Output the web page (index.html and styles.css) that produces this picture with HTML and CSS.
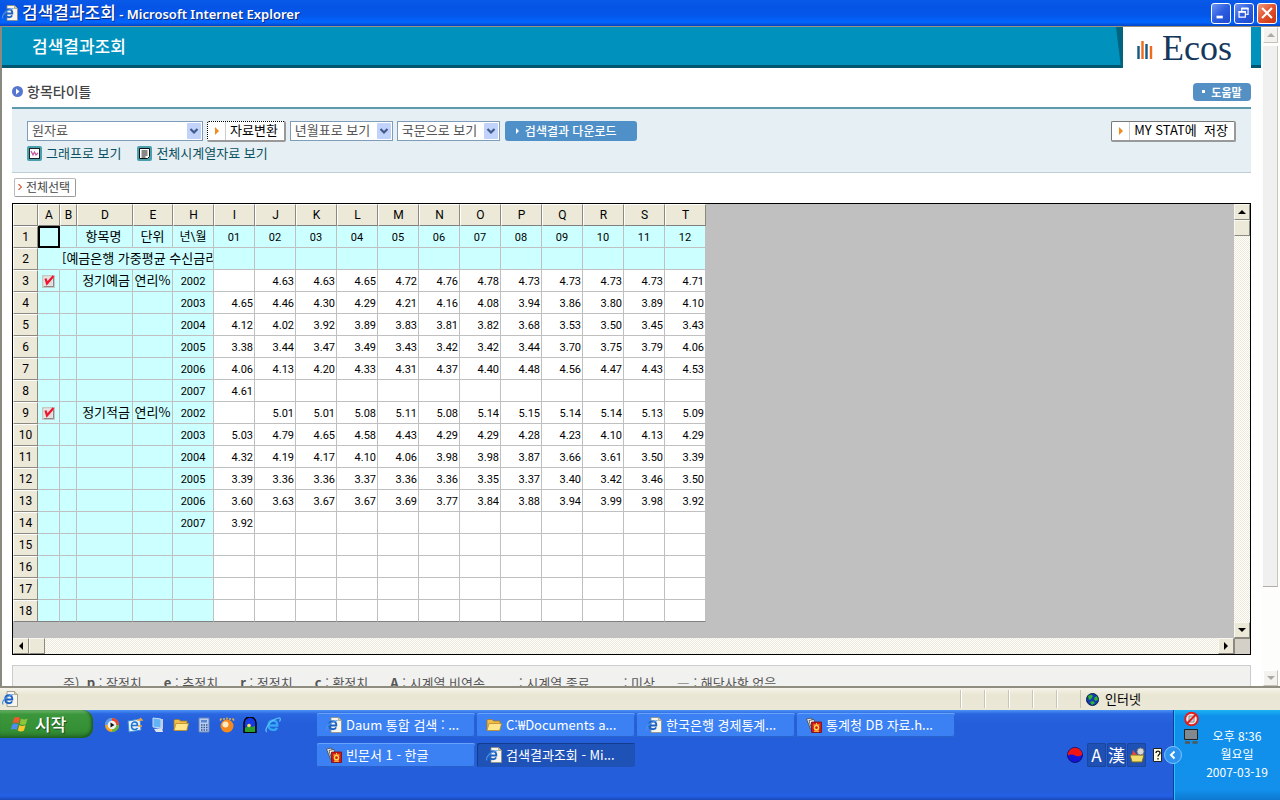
FILE: index.html
```
<!DOCTYPE html>
<html lang="ko">
<head>
<meta charset="utf-8">
<title>검색결과조회 - Microsoft Internet Explorer</title>
<link rel="stylesheet" href="styles.css">
</head>
<body>
<svg class="defs" aria-hidden="true">
  <defs>
    <symbol id="ie-page" viewBox="0 0 16 16">
      <path d="M5 .5h7.500l3 3v12H5z" fill="#f6f5ee" stroke="#8d8d80" stroke-width=".8"/>
      <path d="M12.500 .5v3h3" fill="#d9c98a" stroke="#8d8d80" stroke-width=".6"/>
      <path d="M3.500 8.500h6.800c.2-2.800-1.300-4.200-3.300-4.200-2.200 0-3.800 1.700-3.800 4s1.600 3.900 3.900 3.900c1.400 0 2.500-.7 3-1.800" fill="none" stroke="#1b62c4" stroke-width="1.900"/>
      <path d="M1.200 13.500C-1 11 3 5.500 11.500 3.500" fill="none" stroke="#4b93e6" stroke-width="1.100"/>
    </symbol>
    <symbol id="ie" viewBox="0 0 16 16">
      <path d="M4 8.500h8.300c.2-3.300-1.700-5-4.200-5-2.700 0-4.600 2-4.600 4.700s2 4.700 4.700 4.700c1.800 0 3.200-.9 3.800-2.200" fill="none" stroke="#35a8f5" stroke-width="2.300"/>
      <path d="M1.800 15C-1.500 13 5 3 13.500 1c2.500-.4 2 2 1 3.500" fill="none" stroke="#5cc1fa" stroke-width="1.200"/>
    </symbol>
    <symbol id="hwp" viewBox="0 0 16 16">
      <path d="M.5 2l5-1 3 9-4 2z" fill="#f3f3f3" stroke="#444" stroke-width=".8"/>
      <path d="M3 3.500l5-1 2 9-4 2z" fill="#fff" stroke="#444" stroke-width=".8"/>
      <path d="M5.500 5h10v10.500h-10z" fill="#d31a1a" stroke="#7a0c0c" stroke-width=".8"/>
      <circle cx="10.500" cy="10.700" r="2.100" fill="none" stroke="#ffe04a" stroke-width="1.400"/>
      <path d="M10.500 6v1.500M7.500 8h6M8 14.200h5" stroke="#ffe04a" stroke-width="1"/>
    </symbol>
    <symbol id="folder" viewBox="0 0 16 16">
      <path d="M1 13V3.500l1-1h4l1.500 1.500H14V13z" fill="#f0bd4a" stroke="#a8771a" stroke-width=".8"/>
      <path d="M1 13.500L3 6.500h12.500l-1.800 7z" fill="#ffe68c" stroke="#b98a28" stroke-width=".8"/>
    </symbol>
    <symbol id="chevron" viewBox="0 0 14 16">
      <rect width="14" height="16" rx="1" fill="#c1d2fb"/>
      <path d="M3.500 6l3.500 3.500L10.500 6" fill="none" stroke="#3f5a8c" stroke-width="2.200"/>
    </symbol>
    <symbol id="go" viewBox="0 0 6 8"><path d="M1 0l4 4-4 4z" fill="#f08a1c"/></symbol>
    <symbol id="up" viewBox="0 0 8 4"><path d="M0 4l4-4 4 4z" fill="currentColor"/></symbol>
    <symbol id="down" viewBox="0 0 8 4"><path d="M0 0l4 4 4-4z" fill="currentColor"/></symbol>
    <symbol id="left" viewBox="0 0 4 8"><path d="M4 0L0 4l4 4z" fill="currentColor"/></symbol>
    <symbol id="right" viewBox="0 0 4 8"><path d="M0 0l4 4-4 4z" fill="currentColor"/></symbol>
  </defs>
</svg>

<header class="titlebar">
  <svg class="i16"><use href="#ie-page"/></svg>
  <h1><span class="ko">검색결과조회</span> - Microsoft Internet Explorer</h1>
  <div class="winbtns">
    <button aria-label="최소화"><svg viewBox="0 0 20 20"><path d="M5 14.500h7" stroke="#fff" stroke-width="3"/></svg></button>
    <button aria-label="이전 크기로"><svg viewBox="0 0 20 20"><path d="M7.500 8V5h7v6.500h-2M4.500 8.500h7v6h-7z" fill="none" stroke="#fff" stroke-width="1.300"/><path d="M7 5h8M4 8.800h8" stroke="#fff" stroke-width="2"/></svg></button>
    <button class="close" aria-label="닫기"><svg viewBox="0 0 20 20"><path d="M4.500 4.500l11 11M15.500 4.500l-11 11" stroke="#fff" stroke-width="2.300"/></svg></button>
  </div>
</header>

<div class="window">
  <main>
    <div class="banner">
      <h2>검색결과조회</h2>
      <svg class="slant" viewBox="0 0 7 40" preserveAspectRatio="none"><path d="M0 0h7v40H5z" fill="#02647f"/></svg>
      <div class="logo">
        <svg viewBox="0 0 16 20"><path d="M1.500 6v13M9.500 4v15" stroke="#155a80" stroke-width="2.400"/><path d="M5.500 1v18M14 6v13" stroke="#f26a1c" stroke-width="2.400"/></svg>
        <span>Ecos</span>
      </div>
    </div>

    <div class="body">
      <div class="heading">
        <svg class="bullet" viewBox="0 0 11 11"><circle cx="5.500" cy="5.500" r="5.500" fill="#5676cf"/><path d="M4 2.500l3.500 3L4 8.500z" fill="#fff"/></svg>
        <h3>항목타이틀</h3>
        <button class="help"><i></i>도움말</button>
      </div>

      <form class="toolbar">
        <div class="row">
          <span class="sel wide"><select aria-label="자료 종류"><option>원자료</option></select><svg><use href="#chevron"/></svg></span>
          <button type="button" class="btn focus"><span class="mark"><svg><use href="#go"/></svg></span><span class="txt">자료변환</span></button>
          <span class="sel"><select aria-label="표 형식"><option>년월표로 보기</option></select><svg><use href="#chevron"/></svg></span>
          <span class="sel"><select aria-label="언어"><option>국문으로 보기</option></select><svg><use href="#chevron"/></svg></span>
          <button type="button" class="download"><svg viewBox="0 0 4 6"><path d="M0 0l3 3-3 3z" fill="#fff"/></svg>검색결과 다운로드</button>
          <button type="button" class="btn save"><span class="mark"><svg><use href="#go"/></svg></span><span class="txt">MY STAT에 &nbsp;저장</span></button>
        </div>
        <div class="links">
          <a href="#"><svg viewBox="0 0 15 15"><rect width="15" height="15" rx="2" fill="#4aa0ad"/><rect x="2.500" y="2.500" width="10" height="10" fill="#fff" stroke="#222"/><path d="M4 5l2 4 1.500-3L9 9l2-2" fill="none" stroke="#c2559a" stroke-width="1.200"/></svg>그래프로 보기</a>
          <a href="#"><svg viewBox="0 0 15 15"><rect width="15" height="15" rx="2" fill="#4aa0ad"/><path d="M2.500 2.500h10v8l-2 2h-8z" fill="#fff" stroke="#111"/><path d="M4.500 5h6M4.500 7h6M4.500 9h6M4.500 11h4" stroke="#111"/></svg>전체시계열자료 보기</a>
        </div>
      </form>

      <button class="all"><svg viewBox="0 0 4 6"><path d="M.5 0l3 3-3 3" fill="none" stroke="#d8623a" stroke-width="1.200"/></svg>전체선택</button>

      <div class="grid">
        <div class="sheet">
          <table>
            <colgroup><col class="c-n"><col class="c-a"><col class="c-b"><col class="c-d"><col class="c-e"><col class="c-v" span="13"></colgroup>
            <thead>
              <tr><th><th>A<th>B<th>D<th>E<th>H<th>I<th>J<th>K<th>L<th>M<th>N<th>O<th>P<th>Q<th>R<th>S<th>T
            </thead>
            <tbody>
              <tr class="top"><th>1<td class="cur"><td><td>항목명<td>단위<td>년\월<td>01<td>02<td>03<td>04<td>05<td>06<td>07<td>08<td>09<td>10<td>11<td>12
              <tr class="top"><th>2<td class="open"><td colspan="4" class="group">[예금은행 가중평균 수신금리<td><td><td><td><td><td><td><td><td><td><td><td>
              <tr><th>3<td><input type="checkbox" checked aria-label="정기예금 선택"><td><td>정기예금<td>연리%<td>2002<td><td>4.63<td>4.63<td>4.65<td>4.72<td>4.76<td>4.78<td>4.73<td>4.73<td>4.73<td>4.73<td>4.71
              <tr><th>4<td><td><td><td><td>2003<td>4.65<td>4.46<td>4.30<td>4.29<td>4.21<td>4.16<td>4.08<td>3.94<td>3.86<td>3.80<td>3.89<td>4.10
              <tr><th>5<td><td><td><td><td>2004<td>4.12<td>4.02<td>3.92<td>3.89<td>3.83<td>3.81<td>3.82<td>3.68<td>3.53<td>3.50<td>3.45<td>3.43
              <tr><th>6<td><td><td><td><td>2005<td>3.38<td>3.44<td>3.47<td>3.49<td>3.43<td>3.42<td>3.42<td>3.44<td>3.70<td>3.75<td>3.79<td>4.06
              <tr><th>7<td><td><td><td><td>2006<td>4.06<td>4.13<td>4.20<td>4.33<td>4.31<td>4.37<td>4.40<td>4.48<td>4.56<td>4.47<td>4.43<td>4.53
              <tr><th>8<td><td><td><td><td>2007<td>4.61<td><td><td><td><td><td><td><td><td><td><td>
              <tr><th>9<td><input type="checkbox" checked aria-label="정기적금 선택"><td><td>정기적금<td>연리%<td>2002<td><td>5.01<td>5.01<td>5.08<td>5.11<td>5.08<td>5.14<td>5.15<td>5.14<td>5.14<td>5.13<td>5.09
              <tr><th>10<td><td><td><td><td>2003<td>5.03<td>4.79<td>4.65<td>4.58<td>4.43<td>4.29<td>4.29<td>4.28<td>4.23<td>4.10<td>4.13<td>4.29
              <tr><th>11<td><td><td><td><td>2004<td>4.32<td>4.19<td>4.17<td>4.10<td>4.06<td>3.98<td>3.98<td>3.87<td>3.66<td>3.61<td>3.50<td>3.39
              <tr><th>12<td><td><td><td><td>2005<td>3.39<td>3.36<td>3.36<td>3.37<td>3.36<td>3.36<td>3.35<td>3.37<td>3.40<td>3.42<td>3.46<td>3.50
              <tr><th>13<td><td><td><td><td>2006<td>3.60<td>3.63<td>3.67<td>3.67<td>3.69<td>3.77<td>3.84<td>3.88<td>3.94<td>3.99<td>3.98<td>3.92
              <tr><th>14<td><td><td><td><td>2007<td>3.92<td><td><td><td><td><td><td><td><td><td><td>
              <tr><th>15<td><td><td><td><td><td><td><td><td><td><td><td><td><td><td><td><td>
              <tr><th>16<td><td><td><td><td><td><td><td><td><td><td><td><td><td><td><td><td>
              <tr><th>17<td><td><td><td><td><td><td><td><td><td><td><td><td><td><td><td><td>
              <tr><th>18<td><td><td><td><td><td><td><td><td><td><td><td><td><td><td><td><td>
            </tbody>
          </table>
        </div>
        <div class="vbar"><span class="key"><svg class="v"><use href="#up"/></svg></span><span class="key"></span><span class="key end"><svg class="v"><use href="#down"/></svg></span></div>
        <div class="hbar"><span class="key"><svg class="h"><use href="#left"/></svg></span><span class="key"></span><span class="key end"><svg class="h"><use href="#right"/></svg></span></div>
        <div class="corner"></div>
      </div>

      <p class="notes"><span>주)  <b>p</b> : 잠정치</span><span><b>e</b> : 추정치</span><span><b>r</b> : 정정치</span><span><b>c</b> : 확정치</span><span><b>A</b> : 시계열 비연속</span><span class="gap">: 시계열 종료</span><span class="gap">: 미상</span><span>― : 해당사항 없음</span></p>
    </div>
  </main>
  <div class="pagebar"><span class="pkey"><svg class="v"><use href="#up"/></svg></span><span class="pthumb"></span><span class="pkey end"><svg class="v"><use href="#down"/></svg></span></div>
</div>

<div class="status">
  <svg class="i16"><use href="#ie-page"/></svg>
  <div class="cells"><i></i><i></i><i></i><i></i><i></i></div>
  <div class="zone"><svg viewBox="0 0 13 13"><circle cx="6.500" cy="6.500" r="6" fill="#123bb0" stroke="#0a1d4a"/><path d="M2 3l3-1.500L7 3 5 6 3 7zM8 5l3-2 1 4-3 1zM4 9l3-1 2 2-3 2z" fill="#2fb52f"/></svg>인터넷</div>
</div>

<footer class="taskbar">
  <button class="start"><svg viewBox="0 0 18 18"><path d="M3 3c2-1.500 4-1.300 6 0L7.500 8.500c-2-1.200-4-1.300-6 0z" fill="#f0592b"/><path d="M10 3.500c2 1.200 4 1.200 6.500 0L15 9c-2 1.200-4 1.200-6.300 0z" fill="#8cc63e"/><path d="M1.200 9.500c2-1.300 4-1.200 6 0L5.700 15c-2-1.200-4-1.300-6 0z" fill="#4f8df0"/><path d="M8.300 10c2 1.300 4 1.200 6.300 0L13 15.500c-2 1.200-4 1.200-6.200 0z" fill="#fbc72c"/></svg>시작</button>
  <nav class="quick">
    <svg viewBox="0 0 16 16"><circle cx="8" cy="8" r="7" fill="#f7a51e"/><path d="M8 1a7 7 0 0 1 7 7H8z" fill="#e8452c"/><path d="M1 8a7 7 0 0 1 7-7v7z" fill="#5a9df2"/><path d="M15 8a7 7 0 0 1-7 7V8z" fill="#62b53b"/><circle cx="8" cy="8" r="4.300" fill="#f2f2f2"/><path d="M6.500 5.500l4 2.500-4 2.500z" fill="#111"/></svg>
    <svg viewBox="0 0 16 16"><path d="M1 4l12-2 1 11-12 2z" fill="#e6f2ff" stroke="#3b8ed8"/><path d="M5 8.500h5.500c0-2.500-1.200-3.500-2.800-3.500S4.500 6.500 4.500 8.800s1.500 3.700 3.200 3.700 2.500-.8 2.800-1.500" fill="none" stroke="#1c74d0" stroke-width="1.600"/><path d="M10 3h5l-2-2M15 9h-4" stroke="#f2a23a" stroke-width="1.300" fill="none"/></svg>
    <svg viewBox="0 0 16 16"><path d="M3 1l8 1v9l-8-1z" fill="#62b4f5" stroke="#c9dcf2"/><path d="M4 12l8-1 1 4H6z" fill="#dfe3ea"/><path d="M12 2v10" stroke="#c4cfe2" stroke-width="2"/></svg>
    <svg><use href="#folder"/></svg>
    <svg viewBox="0 0 16 16"><path d="M3 1h10v14H3z" fill="#b9cdf2" stroke="#6c87b8"/><path d="M5 3h6v2.500H5z" fill="#5c88cf"/><path d="M5 8h1.500M7.500 8H9M10 8h1.500M5 10.500h1.500M7.500 10.500H9M10 10.500h1.500M5 13h1.500M7.500 13H9M10 13h1.500" stroke="#34568f" stroke-width="1.400"/></svg>
    <svg viewBox="0 0 16 16"><circle cx="8" cy="9" r="6.500" fill="#f58a1c"/><circle cx="6.500" cy="7.500" r="3" fill="#ffe9c4"/><path d="M1 3.500l1.500-2M5 3V1M8 2.500V.5M11 3V1M15 3.500l-1.500-2" stroke="#f0b040" stroke-width="1.500"/></svg>
    <svg viewBox="0 0 16 16"><path d="M2 15.500V6a6 6 0 0 1 12 0v9.500z" fill="#1639e8" stroke="#050505" stroke-width="1.500"/><path d="M3 15v-4l3-2 4 1 3-1v6z" fill="#2c9e2c"/><circle cx="7" cy="8.500" r="1.800" fill="#ffe34a"/></svg>
    <svg><use href="#ie"/></svg>
  </nav>
  <div class="tasks">
    <button><svg><use href="#ie-page"/></svg>Daum 통합 검색 : ...</button>
    <button><svg><use href="#folder"/></svg>C:₩Documents a...</button>
    <button><svg><use href="#ie-page"/></svg>한국은행 경제통계...</button>
    <button><svg><use href="#hwp"/></svg>통계청 DB 자료.h...</button>
    <button><svg><use href="#hwp"/></svg>빈문서 1 - 한글</button>
    <button class="on"><svg><use href="#ie-page"/></svg>검색결과조회 - Mi...</button>
  </div>
  <div class="ime">
    <svg class="flag" viewBox="0 0 16 16"><circle cx="8" cy="8" r="7.500" fill="#1414d8" stroke="#0a0a50" stroke-width=".8"/><path d="M.8 8.500a7.200 7.200 0 0 1 14.400-1C13 9.500 10.500 10 8 8.500S3 7.500.8 8.500z" fill="#f01414"/></svg>
    <button>A</button><button>漢</button>
    <button aria-label="IME 패드"><svg viewBox="0 0 16 16"><path d="M1 8h14l-2 7H3z" fill="#f2dc6a" stroke="#7a6a20"/><path d="M3 8l1-5 4 5" fill="#e04a3a"/><circle cx="11.500" cy="4.500" r="3.500" fill="#d8d8d8" stroke="#777"/></svg></button>
    <svg class="q" viewBox="0 0 10 14"><path d="M.5.5h8v13h-8z" fill="#fffbe0" stroke="#222"/><path d="M3 5c0-2.500 4-2.500 4 0 0 1.500-2 1.500-2 3.500M5 10v1.500" fill="none" stroke="#111" stroke-width="1.300"/></svg>
  </div>
  <div class="tray">
    <button class="fold" aria-label="숨겨진 아이콘 표시"><svg viewBox="0 0 18 18"><circle cx="9" cy="9" r="8.500" fill="#2d93ee" stroke="#7cc4fa"/><path d="M10.500 5.500L7 9l3.500 3.500" fill="none" stroke="#fff" stroke-width="2"/></svg></button>
    <div class="trayicons">
      <svg viewBox="0 0 15 15"><circle cx="7.500" cy="7.500" r="6.300" fill="#f5e9e6" stroke="#e01e1e" stroke-width="1.900"/><path d="M5 4.500h5v6H5z" fill="#ddd" stroke="#888"/><path d="M3 12l9-9" stroke="#e01e1e" stroke-width="1.900"/></svg>
      <svg viewBox="0 0 15 16"><path d="M.5.500h13v10H.5z" fill="#808890" stroke="#222"/><path d="M1 13.500h5M8.500 13.500h5" stroke="#555" stroke-width="2.500"/></svg>
    </div>
    <div class="clock"><span>오후 8:36</span><span>월요일</span><span>2007-03-19</span></div>
  </div>
</footer>
</body>
</html>
```
FILE: styles.css
```
* { box-sizing: border-box; }
html, body { height: 100%; }
body {
  margin: 0;
  display: flex;
  flex-direction: column;
  overflow: hidden;
  background: #fff;
  color: #000;
  font: 13px/16px "Noto Sans CJK KR", sans-serif;
}
h1, h2, h3, p { margin: 0; font-weight: 400; }
button, select { font: inherit; color: inherit; margin: 0; padding: 0; border: 0; background: none; }
svg { display: block; flex: none; }
.defs { position: absolute; width: 0; height: 0; }
.i16 { width: 16px; height: 16px; }

/* window title */
.titlebar {
  flex: none;
  height: 26px;
  display: flex;
  align-items: center;
  gap: 4px;
  padding: 0 3px 0 2px;
  background: linear-gradient(#0a5ae8, #0554e6 25%, #0457ea 60%, #0166ff 85%, #0144c8);
}
.titlebar h1 {
  flex: 1;
  color: #fff;
  font: 600 13px/20px "Noto Sans", "Noto Sans CJK KR", sans-serif;
  text-shadow: 1px 1px #0a2a80;
}
.titlebar .ko { font-size: 17px; font-weight: 500; }
.winbtns { display: flex; gap: 3px; }
.winbtns button {
  width: 20px;
  height: 21px;
  border: 1px solid #fff;
  border-radius: 3px;
  background: linear-gradient(135deg, #6e94f0, #2c5ce0 50%, #1c4ad0);
}
.winbtns .close { background: linear-gradient(135deg, #f09a7c, #e0512c 50%, #c8340e); }
.winbtns svg { width: 18px; height: 18px; }

/* page viewport */
.window {
  flex: 1;
  min-height: 0;
  display: flex;
  border-top: 1px solid #9a917e;
  border-left: 2px solid #8a8980;
}
main { flex: 1; min-width: 0; overflow: hidden; }
.banner {
  height: 41px;
  display: flex;
  padding: 0 10px 0 30px;
  background: #0092bd;
  border-bottom: 3px solid #00566e;
}
.banner h2 { flex: 1; color: #fff; font-size: 17px; font-weight: 500; line-height: 38px; }
.slant { width: 7px; height: 41px; }
.logo {
  height: 41px;
  width: 128px;
  display: flex;
  align-items: center;
  gap: 9px;
  padding-left: 14px;
  background: #fff;
  color: #14375c;
  font: 36px/40px "Liberation Serif", serif;
}
.logo svg { width: 16px; height: 20px; margin-top: 5px; }
.body { padding: 0 10px; }
.heading {
  height: 39px;
  display: flex;
  align-items: center;
  gap: 4px;
  padding: 8px 0 0;
  color: #444;
}
.heading h3 { flex: 1; font-weight: 500; font-size: 14px; line-height: 16px; padding-bottom: 2px; }
.bullet { width: 11px; height: 11px; }
.help {
  width: 58px;
  height: 18px;
  display: flex;
  align-items: center;
  justify-content: center;
  gap: 6px;
  border-radius: 4px;
  background: #5490c4;
  color: #fff;
  font-size: 11px;
  font-weight: 700;
}
.help i { width: 3px; height: 3px; background: #fff; }

.toolbar {
  height: 66px;
  padding: 11px 15px 0;
  background: #e6eff3;
  border-top: 2px solid #5c9aac;
  border-bottom: 1px solid #bcced6;
}
.row { display: flex; align-items: center; gap: 4px; height: 22px; }
.sel { position: relative; width: 103px; height: 20px; }
.sel.wide { width: 176px; }
.sel select {
  appearance: none;
  width: 100%;
  height: 20px;
  padding: 0 18px 2px 4px;
  border: 1px solid #7f9db9;
  background: #fff;
  color: #555;
  line-height: 16px;
}
.sel svg { position: absolute; right: 2px; top: 2px; width: 14px; height: 16px; pointer-events: none; }
.btn {
  height: 21px;
  display: flex;
  align-items: center;
  border: 1px solid #777;
  border-right: 2px solid #999;
  border-bottom: 2px solid #999;
  border-radius: 2px;
  background: #fff;
}
.btn .mark { width: 18px; height: 18px; display: grid; place-items: center; border-right: 1px solid #ccc; }
.btn .mark svg { width: 6px; height: 8px; }
.btn .txt { padding: 0 6px 2px 4px; white-space: nowrap; }
.btn.focus { border-left: 1px dotted #000; border-top: 1px dotted #000; }
.download {
  width: 132px;
  height: 20px;
  margin-left: 1px;
  display: flex;
  align-items: center;
  gap: 5px;
  padding-left: 11px;
  border-radius: 3px;
  background: #5090c8;
  color: #fff;
  font-size: 12px;
  font-weight: 500;
}
.download svg { width: 4px; height: 6px; }
.save { margin-left: auto; }
.links { display: flex; gap: 16px; height: 22px; align-items: center; }
.links a { display: flex; align-items: center; gap: 4px; color: #0a5262; text-decoration: none; }
.links svg { width: 15px; height: 15px; }

.all {
  height: 19px;
  margin: 5px 0 6px 2px;
  display: flex;
  align-items: center;
  gap: 4px;
  padding: 0 5px 2px 3px;
  border: 1px solid #bbb;
  border-right-color: #999;
  border-bottom-color: #999;
  border-radius: 2px;
  background: #fff;
  color: #444;
  font-size: 12px;
}
.all svg { width: 4px; height: 6px; }

/* spreadsheet */
.grid {
  display: grid;
  grid-template-columns: 1fr 16px;
  grid-template-rows: 434px 16px;
  border: 1px solid #000;
}
.sheet { overflow: hidden; background: #c0c0c0; }
table {
  width: 693px;
  table-layout: fixed;
  border-collapse: separate;
  border-spacing: 0;
}
.c-n { width: 25px; }
.c-a { width: 22px; }
.c-b { width: 17px; }
.c-d { width: 56px; }
.c-e { width: 40px; }
.c-v { width: 41px; }
th, td {
  height: 22px;
  padding: 0;
  overflow: hidden;
  white-space: nowrap;
  text-align: center;
  font: 11px/16px Roboto, "Noto Sans CJK KR", sans-serif;
}
th {
  background: #ece9d8;
  border-right: 1px solid #8c8a80;
  border-bottom: 1px solid #8c8a80;
  border-top: 1px solid #fff;
  border-left: 1px solid #fff;
  font-size: 12px;
}
td {
  background: #fff;
  border-right: 1px solid #c0c0c0;
  border-bottom: 1px solid #c0c0c0;
  text-align: right;
  padding: 2px 1px 0 0;
}
td:nth-child(-n+6), .top td { background: #ccffff; text-align: center; padding: 2px 0 0; }
tr td:nth-child(4), tr td:nth-child(5) { font-family: "Noto Sans CJK KR", sans-serif; font-size: 13px; padding-top: 0; padding-bottom: 2px; }
.top td:nth-child(n+7) { font-size: 11px; }
tr:last-child td, tr:last-child th { border-bottom-color: #808080; }
thead th { border-bottom-color: #8c8a80; }
tr td:nth-child(4) { text-align: right; padding-right: 2px; }
.top td:nth-child(4) { text-align: center; }
.top td:nth-child(6) { font-size: 12px; padding-top: 0; }
.top td.group { text-align: left; padding: 0 0 2px 2px; font: 13px/16px "Noto Sans CJK KR", sans-serif; }
.top td.open { border-right-color: #ccffff; }
.top td.cur { border: 2px solid #000; }
td input {
  appearance: none;
  display: block;
  width: 13px;
  height: 13px;
  margin: 0 auto;
  background: #c8c8c4 url("data:image/svg+xml,%3Csvg xmlns='http://www.w3.org/2000/svg' viewBox='0 0 13 13'%3E%3Cpath d='M2 2h9v9H2z' fill='%23ddd' stroke='%23eee'/%3E%3Cpath d='M2 11.500h9.500V3' fill='none' stroke='%23888'/%3E%3Cpath d='M3.500 3.500l1.500 5L11.500 1' fill='none' stroke='%23f0142c' stroke-width='2.200'/%3E%3C/svg%3E");
}
.vbar, .hbar {
  display: flex;
  background: repeating-conic-gradient(#fff 0 25%, #ece9d8 0 50%) 0 0 / 2px 2px;
}
.vbar { flex-direction: column; }
.key {
  width: 16px;
  height: 16px;
  display: grid;
  place-items: center;
  background: #ece9d8;
  border: 1px solid #f8f7f0;
  border-right-color: #8c8a80;
  border-bottom-color: #8c8a80;
}
.end { margin-top: auto; }
.hbar .end { margin: 0 0 0 auto; }
svg.v { width: 8px; height: 4px; }
svg.h { width: 4px; height: 8px; }
.corner { background: #d4d0c8; border-left: 1px solid #8c8a80; border-top: 1px solid #8c8a80; }

.notes {
  display: flex;
  gap: 22px;
  height: 60px;
  margin-top: 10px;
  padding: 9px 50px;
  background: #f1f1f0;
  border: 1px solid #ccc;
  color: #555;
  font-size: 13px;
  white-space: pre;
}
.notes .gap { padding-left: 12px; }

/* page scroll bar */
.pagebar { width: 19px; display: flex; flex-direction: column; align-items: center; background: #fdfdfc; }
.pkey {
  width: 15px;
  height: 16px;
  display: grid;
  place-items: center;
  background: #f3f2ee;
  border: 1px solid #fff;
  border-right-color: #c4c2b8;
  border-bottom-color: #c4c2b8;
  color: #aaa;
}
.pthumb { width: 15px; flex: 0 1 541px; margin-top: 3px; background: #f1f0f0; border-right: 1px solid #c8c6bc; border-bottom: 1px solid #b0aea4; }

/* status line */
.status {
  flex: none;
  height: 24px;
  display: flex;
  align-items: center;
  padding: 0 4px 0 2px;
  border-top: 2px solid #8f8d80;
  background: linear-gradient(#f6f4ea, #e9e6d4 30%, #ebe8d8);
}
.cells { margin-left: auto; display: flex; }
.cells i { width: 24px; height: 18px; border-left: 1px solid #c8c5b4; box-shadow: inset 1px 0 #fff; }
.zone { display: flex; align-items: center; gap: 6px; width: 196px; height: 18px; padding-left: 5px; border-left: 1px solid #c8c5b4; }
.zone svg { width: 13px; height: 13px; }

/* task bar */
.taskbar {
  flex: none;
  height: 90px;
  display: flex;
  align-items: flex-start;
  background: linear-gradient(#4a92f6, #2a66e0 4px, #245edb 14px, #245edb 80px, #2460e4 86px, #1a48b8);
  color: #fff;
}
.start {
  width: 93px;
  height: 28px;
  display: flex;
  align-items: center;
  gap: 6px;
  padding-left: 11px;
  border-radius: 0 10px 10px 0;
  background: linear-gradient(#6cb46a, #3c973c 15%, #348f34 75%, #26722a);
  box-shadow: inset -2px -1px 3px #1c5c20;
  font-size: 17px;
  font-weight: 500;
  text-shadow: 1px 1px 1px #1a4a1c;
}
.start svg { width: 18px; height: 18px; }
.quick { display: flex; gap: 7px; padding: 7px 0 0 11px; }
.quick svg { width: 16px; height: 16px; }
.tasks {
  flex: 1;
  min-width: 0;
  display: grid;
  grid-template-columns: repeat(auto-fill, 158px);
  gap: 6px 2px;
  padding: 3px 0 0 36px;
}
.tasks button {
  height: 24px;
  display: flex;
  align-items: center;
  gap: 4px;
  padding-left: 9px;
  border-radius: 2px;
  background: #3c81f3;
  box-shadow: inset 0 1px #69a2fa, inset -1px -1px #2a62cc;
  white-space: nowrap;
  overflow: hidden;
}
.tasks svg { width: 16px; height: 16px; }
.tasks .on { background: #1e52b7; box-shadow: inset 1px 1px #143c8c; }
.ime { display: flex; align-items: center; gap: 1px; height: 24px; margin: 33px 10px 0 0; }
.flag { width: 16px; height: 16px; margin-right: 3px; }
.ime button {
  width: 19px;
  height: 24px;
  display: grid;
  place-items: center;
  border-radius: 2px;
  background: #1f50b4;
  box-shadow: inset 0 0 0 1px #1a469e;
  font: 400 17px/22px "Noto Sans CJK KR", sans-serif;
}
.ime button svg { width: 16px; height: 16px; }
.ime .q { width: 10px; height: 14px; margin-left: 6px; }
.tray {
  position: relative;
  width: 107px;
  height: 90px;
  display: flex;
  padding-left: 10px;
  border-left: 1px solid #0c3c9c;
  box-shadow: inset 1px 0 #2cc0f8;
  background: linear-gradient(#1cb2f4, #0f90ea 6px, #1290ec 80px, #0d78d0);
}
.fold { position: absolute; left: -10px; top: 36px; width: 18px; height: 18px; }
.trayicons { display: grid; gap: 2px; align-content: start; padding-top: 1px; }
.trayicons svg { width: 15px; height: 16px; }
.clock { flex: 1; display: grid; align-content: start; padding: 17px 5px 0 0; text-align: center; font-size: 12px; line-height: 18px; }
```
